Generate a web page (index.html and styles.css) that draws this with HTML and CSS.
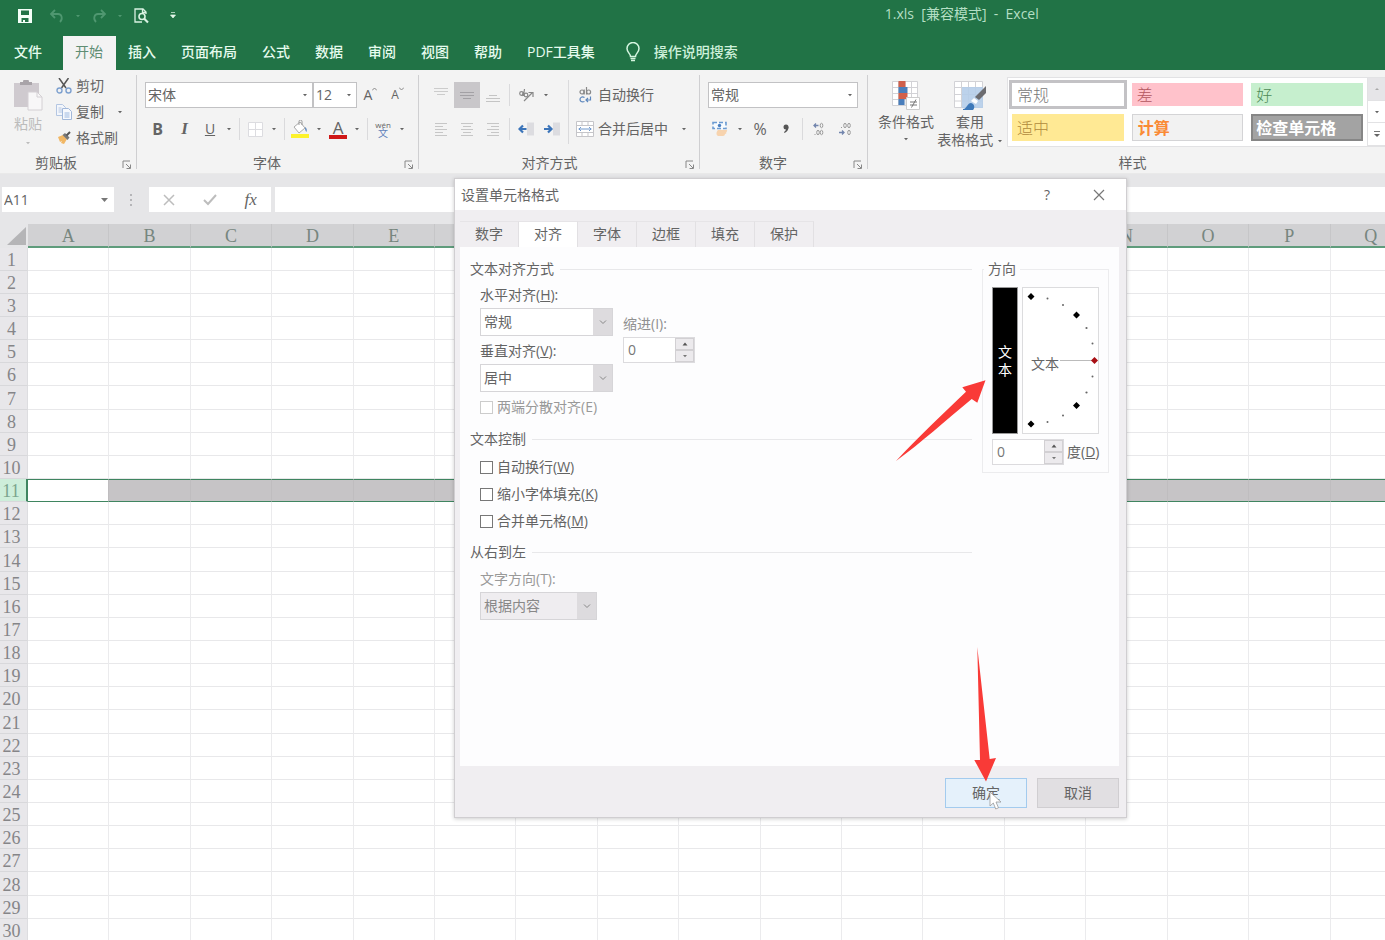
FILE: index.html
```html
<!DOCTYPE html>
<html lang="zh-CN">
<head>
<meta charset="utf-8">
<title>1.xls [兼容模式] - Excel</title>
<link rel="stylesheet" href="styles.css">
</head>
<body>
<svg class="defs" aria-hidden="true">
  <symbol id="launch" viewBox="0 0 10 10"><path d="M1 8V1h7M4 4l4 4M8.500 4.500v4h-4" fill="none" stroke="#888" stroke-width="1"/></symbol>
  <symbol id="caret" viewBox="0 0 6 4"><path d="M1 1h4L3 3.300z" fill="currentColor"/></symbol>
  <symbol id="chev" viewBox="0 0 8 6"><path d="M1 1.500l3 3 3-3" fill="none" stroke="#888"/></symbol>
</svg>

<header class="titlebar">
  <div class="quick">
    <button class="qa" aria-label="保存"><svg width="14" height="14" viewBox="0 0 14 14"><path fill="#f4fff8" fill-rule="evenodd" d="M0 0h14v14H0zM3 1.500v4.500h8V1.500zM3.500 9v4H5v-2h2v2h3.500V9z"/></svg></button>
    <button class="qa dim" aria-label="撤消"><svg width="16" height="14" viewBox="0 0 16 14"><path d="M6 1L2 5l4 4M2.500 5H9c4 0 5 5 2 8" fill="none" stroke="currentColor" stroke-width="1.800"/></svg></button>
    <button class="qd dim" aria-label="撤消选项"><svg width="6" height="4"><use href="#caret"/></svg></button>
    <button class="qa dim" aria-label="恢复"><svg width="16" height="14" viewBox="0 0 16 14"><path d="M10 1l4 4-4 4M13.500 5H7C3 5 2 10 5 13" fill="none" stroke="currentColor" stroke-width="1.800"/></svg></button>
    <button class="qd dim" aria-label="恢复选项"><svg width="6" height="4"><use href="#caret"/></svg></button>
    <button class="qa" aria-label="打印预览"><svg width="16" height="16" viewBox="0 0 16 16"><path d="M13 6V4L10 1H2v13h7M9.500 1v3.500H13" fill="none" stroke="#d9f2e2" stroke-width="1.300"/><circle cx="9" cy="8.500" r="3" fill="none" stroke="#d9f2e2" stroke-width="1.600"/><path d="M11 10.500l4 4" stroke="#d9f2e2" stroke-width="2.200"/></svg></button>
    <button class="qa" aria-label="自定义快速访问工具栏"><svg width="6" height="7" viewBox="0 0 6 7"><path d="M1 0.500h4M0.500 3h5L3 6z" fill="#e4f6ea" stroke="#e4f6ea" stroke-width=".7"/></svg></button>
  </div>
  <h1 class="doc-title">1.xls&nbsp; [兼容模式]&nbsp; -&nbsp; Excel</h1>
</header>

<nav class="tabs" aria-label="功能区">
  <button class="tab file">文件</button>
  <button class="tab active">开始</button>
  <button class="tab">插入</button>
  <button class="tab">页面布局</button>
  <button class="tab">公式</button>
  <button class="tab">数据</button>
  <button class="tab">审阅</button>
  <button class="tab">视图</button>
  <button class="tab">帮助</button>
  <button class="tab">PDF工具集</button>
  <button class="tab tell"><svg width="14" height="20" viewBox="0 0 14 20"><path d="M4.500 14.500c0-3-3.500-4-3.500-8a6 6 0 0112 0c0 4-3.500 5-3.500 8z" fill="none" stroke="#d5f5e0" stroke-width="1.500"/><path d="M4.500 16.500h5M5 18.500h4" stroke="#d5f5e0" stroke-width="1.400"/></svg>操作说明搜索</button>
</nav>

<section class="ribbon">
  <div class="group clipboard">
    <div class="content">
      <button class="paste"><svg width="30" height="32" viewBox="0 0 30 32"><path d="M1 3h25v24H1z" fill="#cfcacf"/><path d="M7 5h12V2h-3a3 3 0 00-6 0H7z" fill="#a9a4a9"/><path d="M15 12h9l5 5v13H15z" fill="#f8f7f8" stroke="#d4d0d4"/><path d="M24 12v5h5" fill="none" stroke="#d4d0d4"/></svg>粘贴<svg width="6" height="4" class="gap-top"><use href="#caret"/></svg></button>
      <div class="clip-list">
        <button class="line"><svg width="16" height="16" viewBox="0 0 16 16"><path d="M3 0l7 10M12.500 0l-7 10" stroke="#555" stroke-width="1.500"/><circle cx="3.500" cy="12.500" r="2.500" fill="none" stroke="#7da0cf" stroke-width="1.400"/><circle cx="12.500" cy="12.500" r="2.500" fill="none" stroke="#7da0cf" stroke-width="1.400"/></svg>剪切</button>
        <button class="line"><svg width="16" height="16" viewBox="0 0 16 16"><path d="M.5.5h6l3 3v8h-9z" fill="#f3f6fb" stroke="#b4c6e2"/><path d="M2.500 4h3M2.500 6h4M2.500 8h4" stroke="#b4c6e2"/><path d="M6.500 4.500h6l3 3v8h-9z" fill="#f7f9fd" stroke="#a2b8da"/><path d="M8.500 9h5M8.500 11h5M8.500 13h5" stroke="#9db9e0"/></svg>复制<svg width="6" height="4" class="gap-left"><use href="#caret"/></svg></button>
        <button class="line"><svg width="16" height="16" viewBox="0 0 16 16"><path d="M2 7l5-2 4 4-3 5-3-1 1-2-2 1z" fill="#f1b765"/><path d="M6.500 5l5 5 2-2.500-4.500-4.500z" fill="#777"/><path d="M10.500 5.500L14 2" stroke="#555" stroke-width="2"/></svg>格式刷</button>
      </div>
    </div>
    <div class="caption">剪贴板<button class="launcher" aria-label="剪贴板选项"><svg width="10" height="10"><use href="#launch"/></svg></button></div>
  </div>

  <div class="group font">
    <div class="content rows">
      <div class="row top">
        <label class="combo name"><select aria-label="字体"><option>宋体</option></select><svg width="6" height="4"><use href="#caret"/></svg></label>
        <label class="combo size"><select aria-label="字号"><option>12</option></select><svg width="6" height="4"><use href="#caret"/></svg></label>
        <button class="tool grow" aria-label="增大字号">A<svg width="5" height="4" viewBox="0 0 5 4"><path d="M0 3.500L2.500 1 5 3.500" fill="none" stroke="#888"/></svg></button>
        <button class="tool grow small" aria-label="减小字号">A<svg width="5" height="4" viewBox="0 0 5 4"><path d="M0 .5L2.500 3 5 .5" fill="none" stroke="#888"/></svg></button>
      </div>
      <div class="row">
        <button class="tool bold">B</button><button class="tool italic">I</button><button class="tool under">U</button><button class="dd" aria-label="下划线选项"><svg width="6" height="4"><use href="#caret"/></svg></button>
        <i class="sep"></i>
        <button class="tool" aria-label="边框"><svg width="15" height="15" viewBox="0 0 15 15"><path d="M.5.5h14v14H.5zM7.500 1v13M1 7.500h13" fill="#fff" stroke="#dcdce0"/></svg></button><button class="dd" aria-label="边框选项"><svg width="6" height="4"><use href="#caret"/></svg></button>
        <i class="sep"></i>
        <button class="tool" aria-label="填充颜色"><svg width="18" height="18" viewBox="0 0 18 18"><path d="M3 7l6-5 5 6-6 5z" fill="#fff" stroke="#aaa"/><path d="M8 5V1.500a1.500 1.500 0 013 0V5" fill="none" stroke="#999"/><path d="M14 7c2 1 2 3 1.500 5-1-1-1.500-2-1.500-5" fill="#5b87be"/><path d="M0 14h18v4H0z" fill="#fdf22c"/></svg></button><button class="dd" aria-label="填充颜色选项"><svg width="6" height="4"><use href="#caret"/></svg></button>
        <button class="tool fontcolor">A</button><button class="dd" aria-label="字体颜色选项"><svg width="6" height="4"><use href="#caret"/></svg></button>
        <i class="sep"></i>
        <button class="tool pinyin" aria-label="拼音指南"><span>wén</span><b>文</b></button><button class="dd" aria-label="拼音选项"><svg width="6" height="4"><use href="#caret"/></svg></button>
      </div>
    </div>
    <div class="caption">字体<button class="launcher" aria-label="字体选项"><svg width="10" height="10"><use href="#launch"/></svg></button></div>
  </div>

  <div class="group align">
    <div class="content">
      <div class="rows">
        <div class="row top">
          <button class="tool" aria-label="顶端对齐"><svg width="14" height="16" viewBox="0 0 14 16"><path d="M0 1.500h14M0 4.500h14M3 7.500h8" stroke="#ccc"/></svg></button>
          <button class="tool on" aria-label="垂直居中"><svg width="14" height="16" viewBox="0 0 14 16"><path d="M0 5.500h14M0 8.500h14M3 11.500h8" stroke="#a3a1a5"/></svg></button>
          <button class="tool" aria-label="底端对齐"><svg width="14" height="16" viewBox="0 0 14 16"><path d="M3 8.500h8M0 11.500h14M0 14.500h14" stroke="#c4c4c4"/></svg></button>
          <i class="sep"></i>
          <button class="tool" aria-label="方向"><svg width="16" height="16" viewBox="0 0 16 16" fill="none" stroke="#888" stroke-width="1.200"><path d="M6 14l8-8M10.500 5.500H15V10"/><circle cx="3.500" cy="6.500" r="1.800"/><path d="M5.500 5L4 9M6.500 2L5.500 9"/><circle cx="8" cy="8" r="1.800"/></svg></button><button class="dd" aria-label="方向选项"><svg width="6" height="4"><use href="#caret"/></svg></button>
        </div>
        <div class="row">
          <button class="tool" aria-label="左对齐"><svg width="12" height="14" viewBox="0 0 12 14"><path d="M0 1.500h12M0 4.500h8M0 7.500h12M0 10.500h8M0 13.500h12" stroke="#c6c6c6"/></svg></button>
          <button class="tool" aria-label="居中"><svg width="12" height="14" viewBox="0 0 12 14"><path d="M0 1.500h12M2 4.500h8M0 7.500h12M2 10.500h8M0 13.500h12" stroke="#c6c6c6"/></svg></button>
          <button class="tool" aria-label="右对齐"><svg width="12" height="14" viewBox="0 0 12 14"><path d="M0 1.500h12M4 4.500h8M0 7.500h12M4 10.500h8M0 13.500h12" stroke="#c6c6c6"/></svg></button>
          <i class="sep"></i>
          <button class="tool" aria-label="减少缩进量"><svg width="16" height="14" viewBox="0 0 16 14"><path d="M9 .5h7v13H9z" fill="#dcdce0"/><path d="M8.500 7H2M5 3.500L1.500 7 5 10.500" fill="none" stroke="#3b74b9" stroke-width="2.200"/></svg></button>
          <button class="tool" aria-label="增加缩进量"><svg width="16" height="14" viewBox="0 0 16 14"><path d="M9 .5h7v13H9z" fill="#dcdce0"/><path d="M0 7h7M4 3.500L7.500 7 4 10.500" fill="none" stroke="#3b74b9" stroke-width="2.200"/></svg></button>
        </div>
      </div>
      <i class="sep tall"></i>
      <div class="rows">
        <button class="wide top"><svg width="18" height="18" viewBox="0 0 18 18" fill="none" stroke="#888" stroke-width="1.200"><circle cx="6" cy="6" r="2"/><path d="M8.200 3.500v5M10.500 1v7.500"/><circle cx="12.600" cy="6" r="2"/><path d="M8.500 11.500c-3-1.500-4.500.500-4.500 2s1.500 3 4.500 2M14.500 10.500v3.500H10M12 12l-2 2 2 2" stroke="#5d87bd"/></svg>自动换行</button>
        <button class="wide"><svg width="18" height="18" viewBox="0 0 18 18"><path d="M.5 1.500h17v15H.5zM.5 5.500h17M.5 12.500h17M6 1.500v4M12 1.500v4M6 12.500v4M12 12.500v4" fill="#fff" stroke="#c5c5c9"/><path d="M2.500 9h13M5 7L3 9l2 2M13 7l2 2-2 2" fill="none" stroke="#6f98cd"/></svg>合并后居中<svg width="6" height="4" class="gap-left"><use href="#caret"/></svg></button>
      </div>
    </div>
    <div class="caption">对齐方式<button class="launcher" aria-label="对齐选项"><svg width="10" height="10"><use href="#launch"/></svg></button></div>
  </div>

  <div class="group number">
    <div class="content rows">
      <div class="row top"><label class="combo format"><select aria-label="数字格式"><option>常规</option></select><svg width="6" height="4"><use href="#caret"/></svg></label></div>
      <div class="row">
        <button class="tool" aria-label="会计数字格式"><svg width="16" height="16" viewBox="0 0 16 16"><path d="M1 1.500h13v6H1z" fill="#f6fbff" stroke="#6b9bd2" stroke-width="1.600" stroke-dasharray="4 2"/><circle cx="7.500" cy="4.500" r="1.700" fill="#4b7fc0"/><path d="M6 9h8c2 0 1 2 0 2 1 1 0 2-1 2 0 1-1 2-2 2H6c-2-1-2-4 0-6z" fill="#f7d3ae"/></svg></button><button class="dd" aria-label="货币选项"><svg width="6" height="4"><use href="#caret"/></svg></button>
        <button class="tool percent">%</button><button class="tool comma" aria-label="千位分隔样式"><svg width="8" height="10" viewBox="0 0 8 10"><circle cx="4" cy="3" r="2.500" fill="#555"/><path d="M6.500 3c0 3-1.500 5-4 6L2 8c1.500-1 2-2 2-3z" fill="#555"/></svg></button>
        <i class="sep"></i>
        <button class="tool" aria-label="增加小数位数"><svg width="14" height="14" viewBox="0 0 14 14" fill="none" stroke="#9a9a9a"><path d="M6.500 3.500H2M4 1.500l-2 2 2 2" stroke="#7285ad" stroke-width="1.300"/><ellipse cx="9.500" cy="3.500" rx="1.300" ry="2.200"/><ellipse cx="6" cy="10.500" rx="1.300" ry="2.200"/><ellipse cx="9.500" cy="10.500" rx="1.300" ry="2.200"/><path d="M2.500 12.500h1"/></svg></button>
        <button class="tool" aria-label="减少小数位数"><svg width="14" height="14" viewBox="0 0 14 14" fill="none" stroke="#9a9a9a"><ellipse cx="7" cy="3.500" rx="1.300" ry="2.200"/><ellipse cx="11" cy="3.500" rx="1.300" ry="2.200"/><path d="M3 5.500h1"/><path d="M1 10.500h5M4 8.500l2 2-2 2" stroke="#7285ad" stroke-width="1.300"/><ellipse cx="11" cy="10.500" rx="1.300" ry="2.200"/></svg></button>
      </div>
    </div>
    <div class="caption">数字<button class="launcher" aria-label="数字选项"><svg width="10" height="10"><use href="#launch"/></svg></button></div>
  </div>

  <div class="group styles">
    <div class="content">
      <button class="big"><svg width="30" height="30" viewBox="0 0 30 30"><path d="M1.500 1.500h25v24h-25zM1.500 7.500h25M1.500 13.500h25M1.500 19.500h25M7.500 1.500v24M14 1.500v24M20.500 1.500v24" fill="#fff" stroke="#d2d2d6"/><path d="M7.500 1h7v6h-7z" fill="#cf5f4b"/><path d="M7.500 7h9v6h-9z" fill="#4a7ebb"/><path d="M7.500 13h9v6h-9z" fill="#d2604a"/><path d="M7.500 19h6v6h-6z" fill="#4a7ebb"/><path d="M15.500 17.500h13v12h-13z" fill="#fff" stroke="#ccc"/><path d="M19 22h7M19 25h7M25 19.500l-4.500 8" stroke="#777"/></svg><span>条件格式</span><svg width="6" height="4" class="caret-below"><use href="#caret"/></svg></button>
      <button class="big"><svg width="32" height="30" viewBox="0 0 32 30"><path d="M.5 1.500h28v26H.5zM.5 7.500h28M.5 14.500h28M.5 21h28M7.500 1.500v26M14.500 1.500v26M21.500 1.500v26" fill="#fff" stroke="#d2d2d6"/><path d="M8 7h21v21H8z" fill="#b5cde9" opacity=".9"/><path d="M32 6v7l-7 7-4-3z" fill="#6c6c70"/><path d="M20 18l4 3-2 3-5-3z" fill="#fff"/><path d="M9 29c4 0 4-6 8-6 4 1 4 5 2 7H9z" fill="#3e79b9"/></svg><span>套用<br>表格格式 <svg width="6" height="4"><use href="#caret"/></svg></span></button>
      <div class="gallery">
        <div class="swatches">
          <button class="sw normal">常规</button><button class="sw bad">差</button><button class="sw good">好</button>
          <button class="sw neutral">适中</button><button class="sw calc">计算</button><button class="sw verify">检查单元格</button>
        </div>
        <div class="gscroll">
          <button class="off" aria-label="上一行"><svg width="6" height="4" viewBox="0 0 6 4"><path d="M1 3h4L3 1z" fill="#aaa"/></svg></button>
          <button aria-label="下一行"><svg width="6" height="4"><use href="#caret"/></svg></button>
          <button aria-label="其他"><svg width="6" height="7" viewBox="0 0 6 7"><path d="M0 .5h6" stroke="#777"/><path d="M0 3h6L3 6z" fill="#666"/></svg></button>
        </div>
      </div>
    </div>
    <div class="caption">样式</div>
  </div>
</section>

<section class="formula">
  <label class="namebox"><input type="text" value="A11" aria-label="名称框"><svg width="10" height="6" viewBox="0 0 10 6"><path d="M1 1h7L4.500 5z" fill="#777"/></svg></label>
  <svg class="grip" width="4" height="14" viewBox="0 0 4 14"><path d="M1 1h2v2H1zM1 6h2v2H1zM1 11h2v2H1z" fill="#b5b5b8"/></svg>
  <div class="fbtns">
    <button aria-label="取消输入"><svg width="12" height="12" viewBox="0 0 12 12"><path d="M1 1l10 10M11 1L1 11" stroke="#bdbdbd" stroke-width="1.500"/></svg></button>
    <button aria-label="确认输入"><svg width="14" height="12" viewBox="0 0 14 12"><path d="M1 6l4 4 8-9" fill="none" stroke="#bdbdbd" stroke-width="2"/></svg></button>
    <button class="fx">fx</button>
  </div>
  <input class="finput" type="text" aria-label="编辑栏">
</section>

<main class="sheet">
  <table class="grid">
    <thead><tr id="letters"><th class="corner"><svg width="20" height="18" viewBox="0 0 20 18"><path d="M19 0v18H0z" fill="#b5b5b7"/></svg></th></tr></thead>
    <tbody id="cells"></tbody>
  </table>
</main>

<section class="dialog" role="dialog" aria-labelledby="dlg-title">
  <div class="dlg-title">
    <h2 id="dlg-title">设置单元格格式</h2>
    <button class="help">?</button>
    <button class="close" aria-label="关闭"><svg width="12" height="12" viewBox="0 0 12 12"><path d="M1 1l10 10M11 1L1 11" stroke="#777" stroke-width="1.200"/></svg></button>
  </div>
  <div class="dlg-body">
    <div class="dlg-tabs">
      <button>数字</button><button class="active">对齐</button><button>字体</button><button>边框</button><button>填充</button><button>保护</button>
    </div>
    <div class="panel">
      <div class="left">
        <h3>文本对齐方式</h3>
        <div class="pair">
          <div class="stack">
            <label for="hal">水平对齐(<u>H</u>):</label>
            <div class="drop"><select id="hal"><option>常规</option></select><span><svg width="8" height="6"><use href="#chev"/></svg></span></div>
            <label for="val" class="second">垂直对齐(<u>V</u>):</label>
            <div class="drop"><select id="val"><option>居中</option></select><span><svg width="8" height="6"><use href="#chev"/></svg></span></div>
          </div>
          <div class="stack indent">
            <label for="ind">缩进(I):</label>
            <div class="spin"><input id="ind" type="text" value="0"><div><button aria-label="增加缩进"><svg width="6" height="4" viewBox="0 0 6 4"><path d="M.5 3.500h5L3 .5z" fill="#555"/></svg></button><button aria-label="减少缩进"><svg width="6" height="4"><use href="#caret"/></svg></button></div></div>
          </div>
        </div>
        <label class="check dis"><input type="checkbox" disabled>两端分散对齐(E)</label>
        <h3>文本控制</h3>
        <div class="checks">
          <label class="check"><input type="checkbox"><span>自动换行(<u>W</u>)</span></label>
          <label class="check"><input type="checkbox"><span>缩小字体填充(<u>K</u>)</span></label>
          <label class="check"><input type="checkbox"><span>合并单元格(<u>M</u>)</span></label>
        </div>
        <h3>从右到左</h3>
        <div class="stack rtl">
          <label for="dir">文字方向(T):</label>
          <div class="drop dis"><select id="dir" disabled><option>根据内容</option></select><span><svg width="8" height="6"><use href="#chev"/></svg></span></div>
        </div>
      </div>
      <fieldset class="orient">
        <legend>方向</legend>
        <div class="dials">
          <button class="vert">文<br>本</button>
          <svg class="dial" viewBox="1022 288 75 145" font-size="14">
            <text x="1030" y="369" fill="#666">文本</text>
            <path d="M1059 360.500h32" stroke="#bbb"/>
            <g fill="#000"><path d="M1030 293l3.500 3.500-3.500 3.500-3.500-3.500zM1075.500 311.500l3.500 3.500-3.500 3.500-3.500-3.500zM1075.500 402l3.500 3.500-3.500 3.500-3.500-3.500zM1030 420.500l3.500 3.500-3.500 3.500-3.500-3.500z"/></g>
            <path d="M1093.500 357l3.500 3.500-3.500 3.500-3.500-3.500z" fill="#a80f14"/>
            <g fill="#666"><circle cx="1046.500" cy="298.500" r="1"/><circle cx="1062" cy="305" r="1"/><circle cx="1085.500" cy="328" r="1.100"/><circle cx="1091.500" cy="343.500" r="1"/><circle cx="1091.500" cy="376.500" r="1"/><circle cx="1085.500" cy="392.500" r="1.100"/><circle cx="1062" cy="415.500" r="1"/><circle cx="1046.500" cy="422" r="1"/></g>
          </svg>
        </div>
        <div class="degrees">
          <div class="spin"><input id="deg" type="text" value="0"><div><button aria-label="增加角度"><svg width="6" height="4" viewBox="0 0 6 4"><path d="M.5 3.500h5L3 .5z" fill="#555"/></svg></button><button aria-label="减少角度"><svg width="6" height="4"><use href="#caret"/></svg></button></div></div>
          <label for="deg">度(<u>D</u>)</label>
        </div>
      </fieldset>
    </div>
    <div class="actions"><button class="ok">确定</button><button>取消</button></div>
  </div>
  <svg class="mark to-text" width="92" height="84" viewBox="895 379 92 84"><path d="M896 461C918 437 945 412 966 391.700L962.300 387.300 985.500 380.300 977.300 402.700 971.700 399C945 421 922 442 896 461z" fill="#f93a37"/></svg>
  <svg class="mark to-ok" width="26" height="136" viewBox="972 647 26 136"><path d="M977.300 647L980 760 974.300 760 986 781.500 996 758 989.700 759z" fill="#f93a37"/></svg>
  <svg class="mark pointer" width="14" height="20" viewBox="0 0 14 20"><path d="M1 1v14l3.300-3 2.400 6 2.800-1.200-2.500-5.800H12z" fill="#fff" stroke="#999" stroke-width=".8"/></svg>
</section>
<script src="script.js"></script>
</body>
</html>
```
FILE: styles.css
```css
* { box-sizing: border-box; }
body {
  margin: 0; height: 100vh; overflow: hidden; position: relative;
  display: flex; flex-direction: column;
  font: 14px/20px "Open Sans", "Noto Sans CJK SC", sans-serif;
  color: #646464; background: #fff;
}
button, input, select { font: inherit; color: inherit; border: 0; padding: 0; margin: 0; background: none; border-radius: 0; outline: 0; }
button { display: flex; align-items: center; justify-content: center; white-space: nowrap; }
select { appearance: none; opacity: 1; }
h1, h2, h3 { margin: 0; font: inherit; }
svg { flex: none; display: block; }
.defs { position: absolute; width: 0; height: 0; }

.titlebar { flex: none; height: 36px; background: #217346; display: flex; align-items: center; color: #b4dfc4; padding-bottom: 5px; }
.quick { display: flex; align-items: center; padding-left: 12px; }
.qa { width: 26px; height: 26px; margin-right: 6px; }
.qd { width: 12px; height: 26px; margin: 0 2px 0 -4px; }
.dim { color: #4f9770; }
.doc-title { margin-left: auto; margin-right: 25%; padding-bottom: 3px; white-space: pre; }

.tabs { flex: none; height: 34px; background: #217346; display: flex; }
.tab { padding: 0 13px 3px 12px; color: #e6fbee; font-weight: 500; }
.tab.file { padding: 0 21px 3px 14px; }
.tab.active { background: #f3f3f3; color: #5f8d73; font-weight: 400; }
.tell { gap: 14px; padding-left: 18px; color: #cdf0da; }

.ribbon { flex: none; height: 104px; display: flex; background: #f3f3f3; border-bottom: 1px solid #e9e9e9; }
.group { flex: none; display: flex; flex-direction: column; position: relative; padding: 4px 0 0 8px; }
.group + .group::before { content: ""; position: absolute; left: 0; top: 5px; bottom: 4px; width: 1px; background: #cfcfd1; }
.content { height: 80px; display: flex; }
.caption { display: flex; justify-content: center; align-items: center; position: relative; margin-left: -8px; height: 20px; }
.launcher { position: absolute; right: 4px; bottom: 3px; }
.clipboard { width: 136px; }
.clipboard .caption { padding-right: 24px; }
.font { width: 282px; }
.font .caption, .align .caption, .number .caption { padding-right: 20px; }
.align { width: 281px; padding-left: 10px; }
.number { width: 168px; }
.styles { flex: 1; padding-left: 7px; }
.styles .caption { padding-left: 14px; }

.paste { flex-direction: column; width: 40px; color: #bcbcbc; justify-content: flex-start; padding-top: 6px; gap: 2px; }
.gap-top { margin-top: 5px; }
.gap-left { margin-left: 9px; }
.clip-list { display: flex; flex-direction: column; padding-left: 8px; margin-top: -1px; }
.line { height: 26px; gap: 4px; justify-content: flex-start; }

.rows { flex-direction: column; display: flex; }
.row { display: flex; align-items: center; height: 26px; }
.top { margin: 8px 0 8px; }
.tool { width: 24px; height: 26px; }
.dd { width: 14px; height: 26px; }
.sep { width: 1px; height: 22px; margin: 0 3px; background: #dadadc; }
.sep.tall { height: 64px; margin: 6px 7px 0 3px; }
.combo { display: grid; align-items: center; background: #fff; border: 1px solid #c2c2c4; height: 26px; margin-left: 1px; }
.combo > * { grid-area: 1 / 1; }
.combo > svg { justify-self: end; margin-right: 4px; }
.combo select { padding-left: 2px; width: 100%; }
.combo.name { width: 168px; }
.combo.size { width: 44px; margin-left: 0; }
.combo.format { width: 150px; }
.grow { width: 27px; font-size: 14px; }
.grow svg { margin-bottom: 12px; }
.grow.small { font-size: 12px; }
.bold { width: 27px; font-weight: 700; font-size: 16px; }
.italic { width: 27px; font: italic 700 17px "Liberation Serif", serif; }
.under { text-decoration: underline; font-size: 14px; }
.fontcolor { font-size: 17px; line-height: 15px; font-weight: 500; flex-direction: column; }
.fontcolor::after { content: ""; width: 18px; height: 4px; background: #cf1717; }
.pinyin { flex-direction: column; font-size: 8px; line-height: 7px; }
.pinyin b { font-size: 10px; line-height: 10px; font-weight: 400; color: #5f82bb; }
.align .tool, .number .tool { width: 26px; }
.on { background: #c9c7ca; }
.wide { height: 26px; gap: 4px; justify-content: flex-start; }
.percent { font-size: 16px; }

.big { width: 64px; flex-direction: column; justify-content: flex-start; padding-top: 6px; line-height: 18px; }
.big > span { margin-top: 3px; }
.big span svg { display: inline-block; vertical-align: middle; }
.caret-below { margin-top: 6px; }
.gallery { flex: 1; margin: 3px 0 6px 5px; display: flex; border: 1px solid #e2e2e4; border-right: 0; background: #fff; }
.swatches { flex: 1; display: grid; grid-template-columns: repeat(3, 1fr); gap: 8px; padding: 5px 4px; }
.sw { justify-content: flex-start; padding-left: 5px; font-size: 16px; font-weight: 300; }
.normal { background: #fff; outline: 3px solid #c3c2c5; color: #777; }
.bad { background: #ffc2cb; color: #b3565e; }
.good { background: #c6efce; color: #4d8a57; }
.neutral { background: #ffe994; color: #b08a3c; }
.calc { background: #f2f2f2; border: 1px solid #d4d4d6; color: #fa8a35; font-weight: 700; }
.verify { background: #a3a3a3; border: 2px solid #868686; padding-left: 3px; color: #fff; font-weight: 700; }
.gscroll { width: 18px; display: flex; flex-direction: column; border-left: 1px solid #e2e2e4; }
.gscroll button { flex: 1; border-bottom: 1px solid #e2e2e4; }
.gscroll .off { background: #e6e5e8; }

.formula { flex: none; display: flex; align-items: center; height: 50px; padding: 1px 0 0 2px; background: #e6e6e8; }
.namebox { display: flex; align-items: center; width: 112px; height: 25px; background: #fff; padding: 0 4px 0 2px; }
.namebox input { flex: 1; min-width: 0; }
.grip { margin: 0 16px 0 15px; }
.fbtns { display: flex; background: #fff; height: 25px; width: 122px; }
.fbtns button { flex: 1; }
.fx { font: italic 17px "Liberation Serif", serif; }
.finput { flex: 1; height: 25px; margin-left: 4px; background: #fff; }

.sheet { flex: 1; min-height: 0; overflow: hidden; }
.grid { width: calc(100% + 27px); table-layout: fixed; border-collapse: separate; border-spacing: 0; font: 18px/20px "Liberation Serif", serif; color: #858588; }
.grid th { padding: 0; font-weight: 400; }
.grid td { padding: 0; border-right: 1px solid #ebebed; border-bottom: 1px solid #e8e8ea; }
.grid thead th { height: 24px; background: #d1d1d3; border-right: 1px solid #c6c6c8; border-bottom: 2px solid #5f9c7c; color: #77867f; padding-top: 2px; }
.grid thead .corner { width: 28px; background: #e6e6e8; border-color: #e6e6e8; }
.corner svg { margin-left: 7px; }
.grid tbody tr { height: 23px; }
.grid tbody tr:nth-child(7n) { height: 24px; }
.grid tbody th { background: #e8e7ea; border-right: 1px solid #dddde0; border-bottom: 1px solid #d8d8db; text-align: center; padding: 2px 4px 0 0; }
.grid .picked th { background: #cdeeda; color: #7ba58d; border-right: 2px solid #3f8560; }
.grid .picked td { background: #c6c4c6; border-bottom: 1px solid #3f8560; border-top: 1px solid #3f8560; border-right-color: #bfbdbf; }
.grid .picked .cursor { background: #fff; }

.dialog { position: absolute; left: 454px; top: 178px; width: 673px; background: #f0eef1; border: 1px solid #d0ced1; box-shadow: 0 1px 4px #0003; }
.dlg-title { display: flex; align-items: center; height: 31px; background: #fff; padding: 0 14px 0 6px; }
.dlg-title h2 { flex: 1; }
.dlg-title button { width: 26px; height: 26px; }
.dlg-title .close { margin-left: 26px; }
.dlg-body { padding: 11px 7px 9px 5px; }
.dlg-tabs { display: flex; }
.dlg-tabs button { width: 59px; height: 26px; padding-bottom: 2px; border-top: 1px solid #e6e4e7; border-right: 1px solid #e2e0e3; }
.dlg-tabs .active { background: #fff; }
.panel { display: flex; align-items: flex-start; gap: 10px; background: #fdfdfe; min-height: 519px; padding: 12px 10px; }
.left { flex: 1; }
h3 { display: flex; align-items: center; gap: 6px; }
h3::after { content: ""; flex: 1; height: 1px; background: #e8e8ea; }
.pair { display: flex; gap: 10px; padding: 6px 0 5px 10px; }
.stack { display: flex; flex-direction: column; gap: 3px; width: 133px; }
.second { margin-top: 2px; }
.indent { width: 72px; padding-top: 29px; color: #909090; }
.drop { display: grid; height: 28px; border: 1px solid #d6d5d8; background: #fff; }
.drop > * { grid-area: 1 / 1; }
.drop select { padding-left: 3px; width: 100%; }
.drop span { justify-self: end; width: 19px; background: #dddbde; display: flex; align-items: center; justify-content: center; }
.spin { display: flex; width: 72px; height: 26px; border: 1px solid #dcdbde; background: #fff; color: #777; }
.spin input { flex: 1; min-width: 0; padding-left: 4px; }
.spin div { width: 19px; display: flex; flex-direction: column; }
.spin button { flex: 1; background: #eceaed; border: 1px solid #d2d0d3; }
.check { display: flex; align-items: center; gap: 4px; padding-left: 10px; }
.check input { appearance: none; width: 13px; height: 13px; border: 1px solid #777; background: #fff; }
.check.dis { color: #999; margin-bottom: 12px; }
.check.dis input { border-color: #ccc; }
.checks { display: flex; flex-direction: column; gap: 7px; padding: 8px 0 11px; }
.rtl { padding: 7px 0 0 10px; width: 127px; color: #999; }
.drop.dis { background: #efedf0; color: #888; }
.orient { margin: 0; width: 127px; min-width: 0; border: 1px solid #ececee; padding: 8px 9px 7px; }
.orient legend { padding: 0 4px; margin-left: -8px; }
.dials { display: flex; gap: 4px; height: 147px; }
.vert { width: 26px; background: #000; color: #fff; border: 1px solid #999; line-height: 18px; }
.dial { flex: 1; min-width: 0; height: 100%; border: 1px solid #dcdcde; background: #fff; }
.degrees { display: flex; align-items: center; gap: 3px; margin-top: 5px; white-space: nowrap; }
.actions { display: flex; justify-content: flex-end; gap: 10px; padding-top: 12px; }
.actions button { width: 82px; height: 30px; background: #e1dfe2; border: 1px solid #d0ced1; }
.actions .ok { background: #e5f1fb; border: 1px solid #a3cbee; }
.mark { position: absolute; pointer-events: none; }
.to-text { left: 440px; top: 200px; }
.to-ok { left: 517px; top: 468px; }
.pointer { left: 534px; top: 612px; }
```
FILE: script.js
```javascript
const letters = document.getElementById("letters");
const cells = document.getElementById("cells");
const columns = "ABCDEFGHIJKLMNOPQ";

for (const letter of columns) {
  const th = document.createElement("th");
  th.textContent = letter;
  letters.append(th);
}

for (let r = 1; r <= 30; r++) {
  const row = cells.insertRow();
  const head = document.createElement("th");
  head.textContent = r;
  row.append(head);
  for (let c = 0; c < columns.length; c++) row.insertCell();
  if (r === 11) {
    row.className = "picked";
    row.cells[1].className = "cursor";
  }
}
```
